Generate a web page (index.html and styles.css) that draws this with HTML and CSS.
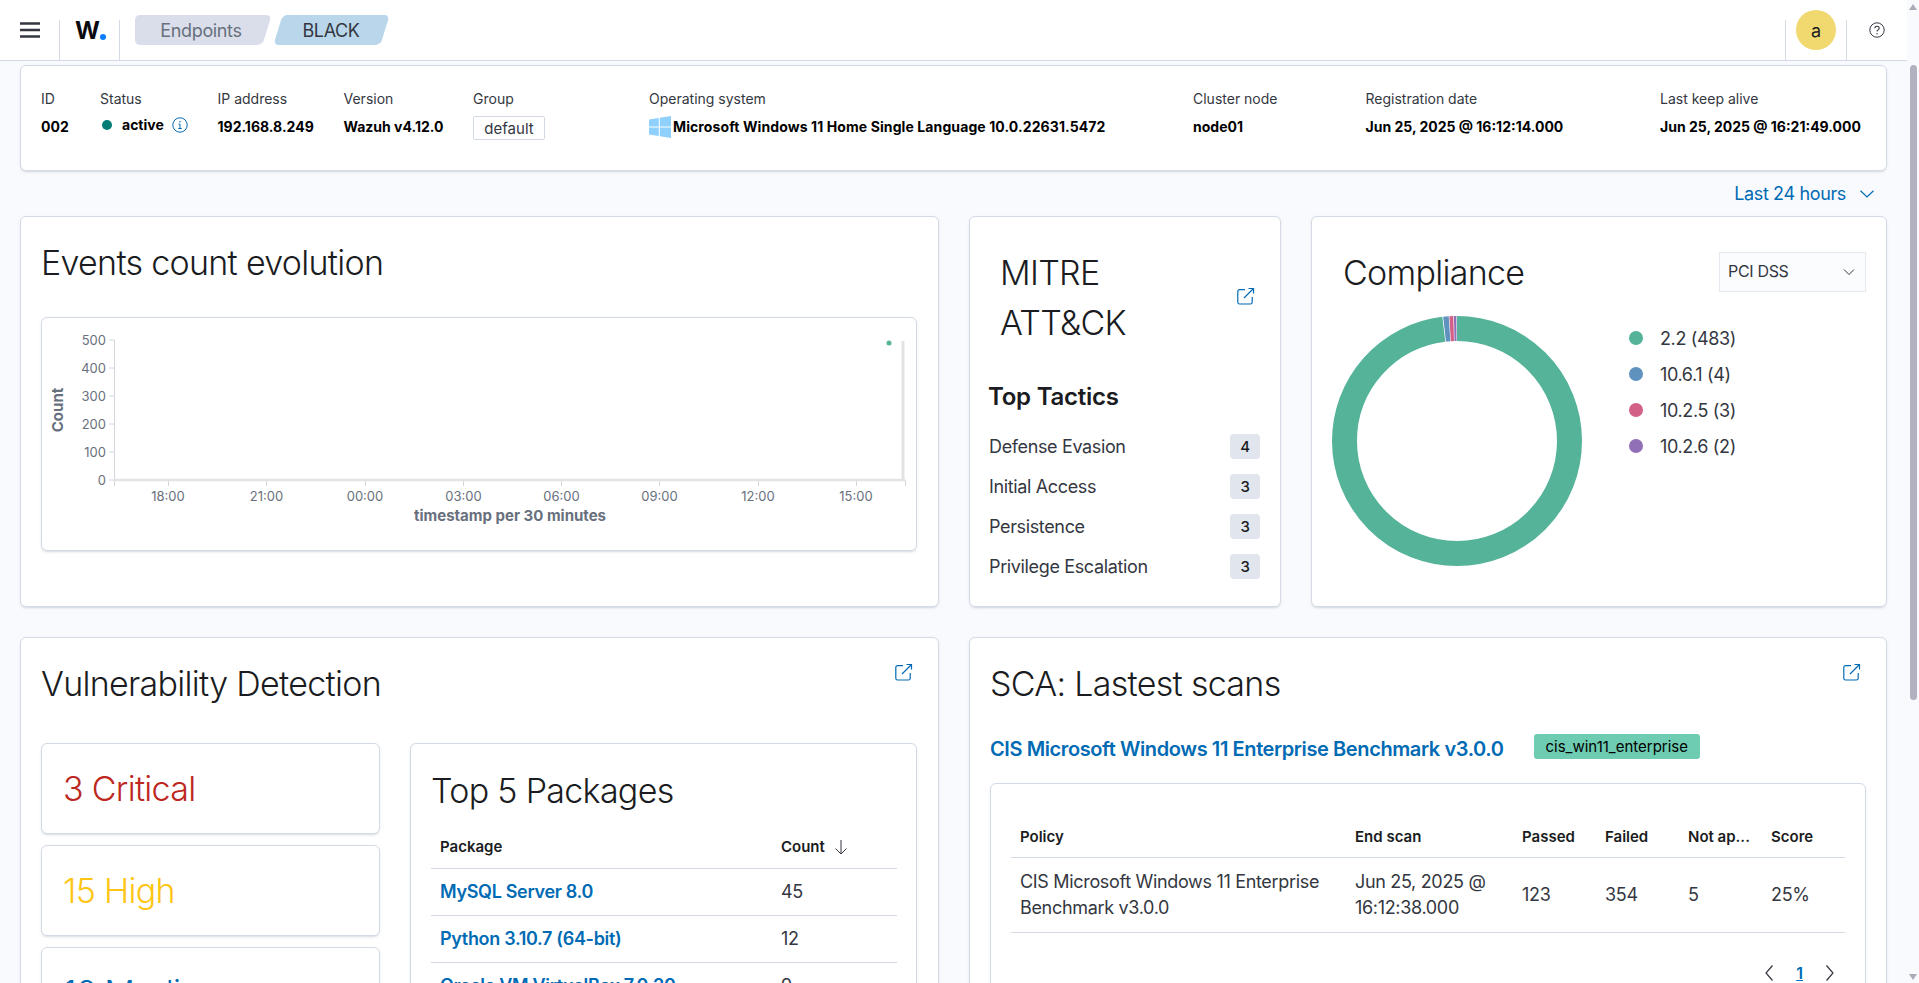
FILE: index.html
```html
<!DOCTYPE html>
<html lang="en">
<head>
    <meta charset="UTF-8">
    <meta name="viewport" content="width=device-width, initial-scale=1.0">
    <title>Endpoints - BLACK</title>
    <link rel="stylesheet" href="styles.css">
</head>
<body>
<div class="app">
    <div class="main">
        <header class="topbar">
            <button class="menu-btn" aria-label="Menu">
                <svg width="20" height="16" viewBox="0 0 20 16"><path d="M0 .2h20v2.600H0zM0 6.700h20v2.600H0zM0 13.200h20v2.600H0z" fill="#343741"/></svg>
            </button>
            <div class="logo">W<span class="logo-dot"></span></div>
            <nav class="crumbs">
                <a class="crumb crumb-parent">Endpoints</a>
                <a class="crumb crumb-current">BLACK</a>
            </nav>
            <div class="topbar-right">
                <div class="avatar-cell"><span class="avatar">a</span></div>
                <div class="help-cell">
                    <svg width="16" height="16" viewBox="0 0 16 16" fill="none" stroke="#343741"><circle cx="8" cy="8" r="7.200"/><path d="M5.800 6.300C5.800 5 6.800 4.200 8 4.200s2.200.8 2.200 2c0 1.700-2.200 1.700-2.200 3.400" stroke-width="1.100"/><circle cx="8" cy="11.700" r=".7" fill="#343741" stroke="none"/></svg>
                </div>
            </div>
        </header>

        <div class="content">
            <section class="card agent-bar">
                <div class="field">
                    <div class="field-label">ID</div>
                    <div class="field-value">002</div>
                </div>
                <div class="field">
                    <div class="field-label">Status</div>
                    <div class="field-value status">
                        <span class="status-dot"></span>active
                        <svg class="status-info" width="16" height="16" viewBox="0 0 16 16" fill="none" stroke="#006bb4"><circle cx="8" cy="8" r="7.200"/><path d="M6.500 7.200H8v4.300M6.300 11.500h3.400"/><circle cx="7.900" cy="4.700" r=".8" fill="#006bb4" stroke="none"/></svg>
                    </div>
                </div>
                <div class="field">
                    <div class="field-label">IP address</div>
                    <div class="field-value">192.168.8.249</div>
                </div>
                <div class="field">
                    <div class="field-label">Version</div>
                    <div class="field-value">Wazuh v4.12.0</div>
                </div>
                <div class="field">
                    <div class="field-label">Group</div>
                    <div class="field-value"><span class="group-tag">default</span></div>
                </div>
                <div class="field">
                    <div class="field-label">Operating system</div>
                    <div class="field-value os">
                        <svg width="22" height="22" viewBox="0 0 22 22" fill="#8fd0ff"><path d="M0 3.500 9.800 2v8.500H0zM10.800 1.800 22 0v10.500H10.800zM0 11.500h9.800V20L0 18.500zM10.800 11.500H22V22l-11.200-1.800z"/></svg>
                        Microsoft Windows 11 Home Single Language 10.0.22631.5472
                    </div>
                </div>
                <div class="field">
                    <div class="field-label">Cluster node</div>
                    <div class="field-value">node01</div>
                </div>
                <div class="field">
                    <div class="field-label">Registration date</div>
                    <div class="field-value">Jun 25, 2025 @ 16:12:14.000</div>
                </div>
                <div class="field">
                    <div class="field-label">Last keep alive</div>
                    <div class="field-value">Jun 25, 2025 @ 16:21:49.000</div>
                </div>
            </section>

            <div class="time-row">
                <a class="time-link">Last 24 hours</a>
                <svg width="16" height="16" viewBox="0 0 16 16" fill="none" stroke="#006bb4" stroke-width="1.200"><path d="M1.500 4.800 8 11l6.500-6.200"/></svg>
            </div>

            <div class="row-top">
                <section class="card events-panel">
                    <h2 class="title">Events count evolution</h2>
                    <div class="card chart-card">
                        <svg class="chart" width="874" height="232" viewBox="-1 0 874 232">
                            <g stroke="#d3d6dc" fill="none">
                                <path d="M71.500 22V168M66 22h5.500M66 50h5.500M66 78h5.500M66 106h5.500M66 134h5.500M66 162h5.500"/>
                                <path d="M125.500 162v6M223.500 162v6M322.500 162v6M420.500 162v6M518.500 162v6M616.500 162v6M715.500 162v6M813.500 162v6M862.500 162v6"/>
                            </g>
                            <path d="M71.500 162H862" stroke="#e2e3e5" stroke-width="2.500"/>
                            <path d="M860 23V162" stroke="#e2e3e5" stroke-width="3"/>
                            <circle cx="846" cy="25" r="2.500" fill="#54b399"/>
                            <g class="tick-y">
                                <text x="63" y="27">500</text>
                                <text x="63" y="55">400</text>
                                <text x="63" y="83">300</text>
                                <text x="63" y="111">200</text>
                                <text x="63" y="139">100</text>
                                <text x="63" y="167">0</text>
                            </g>
                            <g class="tick-x">
                                <text x="125" y="183">18:00</text>
                                <text x="223.500" y="183">21:00</text>
                                <text x="322" y="183">00:00</text>
                                <text x="420.500" y="183">03:00</text>
                                <text x="518.500" y="183">06:00</text>
                                <text x="616.500" y="183">09:00</text>
                                <text x="715" y="183">12:00</text>
                                <text x="813" y="183">15:00</text>
                            </g>
                            <text class="axis-title" x="467" y="203">timestamp per 30 minutes</text>
                            <text class="axis-title" transform="translate(20 92) rotate(-90)">Count</text>
                        </svg>
                    </div>
                </section>

                <section class="card mitre-panel">
                    <div class="mitre-head">
                        <h2 class="title mitre-title">MITRE ATT&amp;CK</h2>
                        <svg class="ext" width="18" height="18" viewBox="0 0 18 18" fill="none" stroke="#006bb4" stroke-width="1.200"><path d="M8 2.600H2.600A1.800 1.800 0 0 0 .8 4.400v10.800A1.800 1.800 0 0 0 2.600 17h10.800a1.800 1.800 0 0 0 1.800-1.800V10M7 11 16 2M11.500 1.500h5v5"/></svg>
                    </div>
                    <h3 class="tactics-title">Top Tactics</h3>
                    <ul class="tactics">
                        <li>Defense Evasion<span class="count">4</span></li>
                        <li>Initial Access<span class="count">3</span></li>
                        <li>Persistence<span class="count">3</span></li>
                        <li>Privilege Escalation<span class="count">3</span></li>
                    </ul>
                </section>

                <section class="card compliance-panel">
                    <div class="compliance-head">
                        <h2 class="title">Compliance</h2>
                        <div class="select"><span class="select-text">PCI DSS</span>
                            <svg width="12" height="12" viewBox="0 0 12 12" fill="none" stroke="#343741"><path d="M1 3.500 6 8.500l5-5"/></svg>
                        </div>
                    </div>
                    <div class="compliance-body">
                        <svg class="donut" width="250" height="250" viewBox="0 0 250 250">
                            <g fill="none" stroke-width="25" transform="rotate(-90 125 125)">
                                <circle cx="125" cy="125" r="112.500" pathLength="492" stroke="#54b399" stroke-dasharray="482.700 9.300"/>
                                <circle cx="125" cy="125" r="112.500" pathLength="492" stroke="#6092c0" stroke-dasharray="3.500 488.500" stroke-dashoffset="-483.200"/>
                                <circle cx="125" cy="125" r="112.500" pathLength="492" stroke="#d36086" stroke-dasharray="2.500 489.500" stroke-dashoffset="-487.100"/>
                                <circle cx="125" cy="125" r="112.500" pathLength="492" stroke="#9170b8" stroke-dasharray="1.600 490.400" stroke-dashoffset="-490"/>
                            </g>
                        </svg>
                        <ul class="legend">
                            <li><span class="legend-dot dot-green"></span>2.2 (483)</li>
                            <li><span class="legend-dot dot-blue"></span>10.6.1 (4)</li>
                            <li><span class="legend-dot dot-pink"></span>10.2.5 (3)</li>
                            <li><span class="legend-dot dot-purple"></span>10.2.6 (2)</li>
                        </ul>
                    </div>
                </section>
            </div>

            <div class="row-bottom">
                <section class="card vuln-panel">
                    <div class="panel-head">
                        <h2 class="title">Vulnerability Detection</h2>
                        <svg class="ext" width="18" height="18" viewBox="0 0 18 18" fill="none" stroke="#006bb4" stroke-width="1.200"><path d="M8 2.600H2.600A1.800 1.800 0 0 0 .8 4.400v10.800A1.800 1.800 0 0 0 2.600 17h10.800a1.800 1.800 0 0 0 1.800-1.800V10M7 11 16 2M11.500 1.500h5v5"/></svg>
                    </div>
                    <div class="vuln-body">
                        <div class="stats">
                            <div class="card stat stat-critical">3 Critical</div>
                            <div class="card stat stat-high">15 High</div>
                            <div class="card stat stat-medium">16 Medium</div>
                        </div>
                        <div class="card packages">
                            <h2 class="title">Top 5 Packages</h2>
                            <table class="table table-packages">
                                <tr>
                                    <th class="col-package">Package</th>
                                    <th>Count
                                        <svg class="sort" width="16" height="16" viewBox="0 0 16 16" fill="none" stroke="#343741"><path d="M8 1v14M2.500 9.500 8 15l5.500-5.500"/></svg>
                                    </th>
                                </tr>
                                <tr><td><a class="link">MySQL Server 8.0</a></td><td>45</td></tr>
                                <tr><td><a class="link">Python 3.10.7 (64-bit)</a></td><td>12</td></tr>
                                <tr><td><a class="link">Oracle VM VirtualBox 7.0.20</a></td><td>9</td></tr>
                            </table>
                        </div>
                    </div>
                </section>

                <section class="card sca-panel">
                    <div class="panel-head">
                        <h2 class="title">SCA: Lastest scans</h2>
                        <svg class="ext" width="18" height="18" viewBox="0 0 18 18" fill="none" stroke="#006bb4" stroke-width="1.200"><path d="M8 2.600H2.600A1.800 1.800 0 0 0 .8 4.400v10.800A1.800 1.800 0 0 0 2.600 17h10.800a1.800 1.800 0 0 0 1.800-1.800V10M7 11 16 2M11.500 1.500h5v5"/></svg>
                    </div>
                    <div class="policy-row">
                        <a class="policy-link">CIS Microsoft Windows 11 Enterprise Benchmark v3.0.0</a>
                        <span class="policy-tag">cis_win11_enterprise</span>
                    </div>
                    <div class="card scans">
                        <table class="table table-scans">
                            <tr>
                                <th class="col-policy">Policy</th>
                                <th class="col-end">End scan</th>
                                <th class="col-num">Passed</th>
                                <th class="col-num">Failed</th>
                                <th class="col-num">Not ap...</th>
                                <th>Score</th>
                            </tr>
                            <tr>
                                <td>CIS Microsoft Windows 11 Enterprise Benchmark v3.0.0</td>
                                <td>Jun 25, 2025 @ 16:12:38.000</td>
                                <td>123</td>
                                <td>354</td>
                                <td>5</td>
                                <td>25%</td>
                            </tr>
                        </table>
                        <div class="pager">
                            <svg width="12" height="18" viewBox="0 0 12 18" fill="none" stroke="#343741" stroke-width="1.200"><path d="M9.500 1.500 3 9l6.500 7.500"/></svg>
                            <a class="page-num">1</a>
                            <svg width="12" height="18" viewBox="0 0 12 18" fill="none" stroke="#343741" stroke-width="1.200"><path d="M2.500 1.500 9 9l-6.500 7.500"/></svg>
                        </div>
                    </div>
                </section>
            </div>
        </div>
    </div>

    <div class="scrollbar">
        <span class="arrow-up"></span>
        <span class="thumb"></span>
        <span class="arrow-down"></span>
    </div>
</div>
</body>
</html>
```

FILE: styles.css
```css
* {
    box-sizing: border-box;
}

html, body {
    height: 100%;
}

body {
    margin: 0;
    overflow: hidden;
    font-family: Inter, 'Liberation Sans', sans-serif;
    font-size: 14px;
    color: #343741;
    background: #f9fafd;
}

ul {
    list-style: none;
    margin: 0;
    padding: 0;
}

.app {
    display: flex;
    height: 100vh;
}

.main {
    flex: 1;
    min-width: 0;
    display: flex;
    flex-direction: column;
    overflow: hidden;
}

/* top bar */
.topbar {
    flex: none;
    height: 61px;
    display: flex;
    align-items: stretch;
    background: #fff;
    border-bottom: 1px solid #d3dae6;
}

.menu-btn {
    width: 60px;
    height: 40px;
    margin-top: 20px;
    padding: 2px 0 0;
    background: none;
    border: none;
    border-right: 1px solid #d3dae6;
    display: flex;
    justify-content: center;
    align-items: flex-start;
}

.logo {
    width: 60px;
    height: 40px;
    margin-top: 20px;
    padding: 1px 0 0 2px;
    border-right: 1px solid #d3dae6;
    display: flex;
    justify-content: center;
    font-size: 24px;
    line-height: 19px;
    font-weight: 700;
    color: #0b0b0f;
}

.logo-dot {
    width: 6px;
    height: 6px;
    margin: 13px 0 0;
    border-radius: 50%;
    background: #0a7cff;
}

.crumbs {
    display: flex;
    gap: 2px;
    margin: 15px 0 0 15px;
    height: 30px;
}

.crumb {
    position: relative;
    z-index: 0;
    display: flex;
    align-items: center;
    justify-content: center;
    font-size: 18px;
    letter-spacing: -0.02em;
}

.crumb::before {
    content: "";
    position: absolute;
    top: 0;
    bottom: 0;
    left: 4.500px;
    right: 4.500px;
    z-index: -1;
    border-radius: 5px;
    transform: skewX(-17deg);
}

.crumb-parent {
    width: 136px;
    padding-right: 4px;
    color: #69707d;
}

.crumb-parent::before, .crumb-parent::after {
    background: #d9deea;
}

/* square off the left end of the first crumb */
.crumb-parent::after {
    content: "";
    position: absolute;
    top: 0;
    bottom: 0;
    left: 0;
    width: 60px;
    z-index: -1;
    border-radius: 5px 0 0 5px;
}

.crumb-current {
    width: 116px;
    color: #343741;
}

.crumb-current::before {
    background: #b9d6ea;
}

.topbar-right {
    margin-left: auto;
    display: flex;
}

.avatar-cell {
    width: 62px;
    height: 40px;
    margin-top: 20px;
    border-left: 1px solid #d3dae6;
    border-right: 1px solid #d3dae6;
}

.avatar {
    display: flex;
    align-items: center;
    justify-content: center;
    width: 40px;
    height: 40px;
    margin: -10px 0 0 10px;
    border-radius: 50%;
    background: #f1d86f;
    color: #1a1c21;
    font-size: 18px;
}

.help-cell {
    width: 60px;
    padding: 22px 0 0 22px;
}

/* cards */
.card {
    background: #fff;
    border: 1px solid #d3dae6;
    border-radius: 6px;
    box-shadow: 0 2px 2px -1px rgba(152, 162, 179, 0.3), 0 1px 5px -2px rgba(152, 162, 179, 0.3);
}

.content {
    padding: 4px 20px 0;
}

.title {
    margin: 0;
    font-size: 34px;
    line-height: 40px;
    font-weight: 300;
    letter-spacing: -0.7px;
    color: #1a1c21;
}

/* agent info */
.agent-bar {
    height: 106px;
    padding: 23px 0 0 20px;
    display: grid;
    grid-template-columns: 59px 117.500px 126px 129.500px 176px 544px 172.500px 294.500px auto;
}

.field-label {
    font-size: 14px;
    line-height: 20px;
    color: #343741;
}

.field-value {
    margin-top: 8px;
    font-size: 14px;
    line-height: 20px;
    font-weight: 700;
    color: #000;
}

.status {
    display: flex;
    align-items: center;
    position: relative;
    top: -2px;
}

.status-dot {
    width: 10px;
    height: 10px;
    margin: 0 10px 0 2px;
    border-radius: 50%;
    background: #017d73;
}

.status-info {
    margin-left: 8px;
}

.group-tag {
    display: inline-block;
    width: 72px;
    height: 24px;
    margin-top: -1px;
    border: 1px solid #d3dae6;
    border-radius: 2px;
    text-align: center;
    font-size: 15px;
    line-height: 23px;
    font-weight: 400;
    color: #343741;
}

.os {
    display: flex;
    align-items: center;
    gap: 2px;
    height: 20px;
    letter-spacing: 0.1px;
}

.time-row {
    height: 45px;
    padding-right: 12px;
    display: flex;
    justify-content: flex-end;
    align-items: center;
    gap: 13px;
    font-size: 18px;
    letter-spacing: -0.02em;
    color: #006bb4;
}

/* first row */
.row-top {
    display: grid;
    grid-template-columns: 919px 312px 1fr;
    gap: 30px;
    height: 391px;
}

.events-panel {
    padding: 26px 21px 0 20px;
}

.chart-card {
    height: 234px;
    margin-top: 34px;
}

.chart {
    display: block;
}

.chart text {
    font-family: Inter, 'Liberation Sans', sans-serif;
    font-size: 13px;
    fill: #69707d;
}

.tick-y text {
    text-anchor: end;
}

.tick-x text {
    text-anchor: middle;
}

.chart .axis-title {
    font-size: 15px;
    font-weight: 700;
    text-anchor: middle;
}

.mitre-panel {
    padding: 31px 20px 0 18px;
}

.mitre-head {
    display: flex;
    align-items: center;
    justify-content: space-between;
    padding: 0 5px 0 12px;
}

.mitre-head .ext {
    margin-top: -5px;
}

.mitre-title {
    width: 180px;
    line-height: 50px;
}

.tactics-title {
    margin: 34px 0 0;
    font-size: 24px;
    line-height: 30px;
    font-weight: 600;
    letter-spacing: -0.01em;
    color: #1a1c21;
}

.tactics {
    margin-top: 14px;
}

.tactics li {
    height: 40px;
    padding: 0 0 0 1px;
    display: flex;
    align-items: center;
    justify-content: space-between;
    font-size: 18px;
    letter-spacing: -0.02em;
}

.count {
    width: 30px;
    height: 25px;
    border-radius: 4px;
    background: #e0e5ee;
    display: flex;
    align-items: center;
    justify-content: center;
    font-size: 15px;
    font-weight: 500;
    color: #1a1c21;
}

.compliance-panel {
    padding: 35px 20px 0 31px;
}

.compliance-head {
    display: flex;
    justify-content: space-between;
    align-items: flex-start;
}

.compliance-head .title {
    margin-top: 1px;
}

.select {
    width: 147px;
    height: 40px;
    padding: 0 10px 3px 8px;
    display: flex;
    align-items: center;
    justify-content: space-between;
    background: #fbfcfd;
    border: 1px solid #e4e8ef;
    font-size: 16px;
    letter-spacing: -0.02em;
}

.select svg {
    margin-top: 3px;
}

.compliance-body {
    display: flex;
    margin: 23px 0 0 -11px;
}

.legend {
    margin: 4px 0 0 47px;
}

.legend li {
    height: 36px;
    display: flex;
    align-items: center;
    font-size: 18px;
    letter-spacing: -0.02em;
}

.legend-dot {
    width: 14px;
    height: 14px;
    margin-right: 17px;
    border-radius: 50%;
}

.dot-green {
    background: #54b399;
}

.dot-blue {
    background: #6092c0;
}

.dot-pink {
    background: #d36086;
}

.dot-purple {
    background: #9170b8;
}

/* second row */
.row-bottom {
    display: grid;
    grid-template-columns: 919px 1fr;
    gap: 30px;
    height: 600px;
    margin-top: 30px;
}

.panel-head {
    display: flex;
    justify-content: space-between;
    align-items: flex-start;
}

.panel-head .ext {
    margin-top: -1px;
}

.vuln-panel {
    padding: 26px 25px 0 20px;
}

.vuln-body {
    display: grid;
    grid-template-columns: 339px 1fr;
    gap: 30px;
    margin: 39px -4px 0 0;
}

.stats {
    display: flex;
    flex-direction: column;
    gap: 11px;
}

.stat {
    height: 91px;
    padding: 25px 21px 0;
    font-size: 34px;
    line-height: 40px;
    font-weight: 300;
    letter-spacing: -0.7px;
}

.stat-critical {
    color: #bd271e;
}

.stat-high {
    color: #fec514;
}

.stat-medium {
    color: #006bb4;
}

.packages {
    height: 400px;
    padding: 27px 19px 0 20px;
}

.table {
    width: 100%;
    border-collapse: collapse;
    table-layout: fixed;
}

.table th {
    text-align: left;
    font-size: 15px;
    font-weight: 600;
    color: #1a1c21;
}

.table td {
    font-size: 18px;
    line-height: 26px;
    letter-spacing: -0.018em;
    border-top: 1px solid #d3dae6;
    border-bottom: 1px solid #d3dae6;
}

.table th, .table td {
    padding-left: 9px;
}

.table-packages {
    margin-top: 15px;
}

.table-packages th {
    height: 42px;
    vertical-align: middle;
}

.table-packages td {
    height: 47px;
}

.col-package {
    width: 341px;
}

.sort {
    margin-left: 4px;
    vertical-align: -3px;
}

.link {
    font-weight: 600;
    color: #006bb4;
}

.sca-panel {
    padding: 26px 20px 0 20px;
}

.sca-panel .ext {
    margin-right: 5px;
}

.policy-row {
    display: flex;
    align-items: flex-start;
    gap: 30px;
    margin-top: 30px;
}

.policy-link {
    margin-top: 2px;
    font-size: 20px;
    line-height: 26px;
    font-weight: 600;
    letter-spacing: -0.02em;
    color: #006bb4;
}

.policy-tag {
    height: 25px;
    padding: 0 12px;
    display: flex;
    align-items: center;
    border-radius: 3px;
    background: #6dccb1;
    color: #000;
    font-size: 15px;
}

.scans {
    height: 400px;
    margin-top: 21px;
    padding: 32px 20px 0;
}

.table-scans th {
    height: 41px;
    vertical-align: middle;
}

.table-scans td {
    height: 75px;
}

.col-policy {
    width: 335px;
}

.col-end {
    width: 167px;
}

.col-num {
    width: 83px;
}

.pager {
    margin: 30px 9px 0 0;
    display: flex;
    justify-content: flex-end;
    align-items: center;
    gap: 21px;
}

.page-num {
    font-size: 16px;
    font-weight: 600;
    color: #006bb4;
    text-decoration: underline;
}

/* drawn scrollbar, the page is scrolled a little in the shot */
.scrollbar {
    flex: none;
    width: 12px;
    display: flex;
    flex-direction: column;
    align-items: center;
    background: #f9fafd;
}

.arrow-up {
    margin-top: 4px;
    border: 4px solid transparent;
    border-top: 0;
    border-bottom: 6px solid #a9abb8;
}

.thumb {
    width: 7px;
    height: 635px;
    margin-top: 55px;
    border-radius: 4px;
    background: #b0b2bf;
}

.arrow-down {
    margin-top: auto;
    margin-bottom: 3px;
    border: 4px solid transparent;
    border-bottom: 0;
    border-top: 6px solid #a9abb8;
}
```
